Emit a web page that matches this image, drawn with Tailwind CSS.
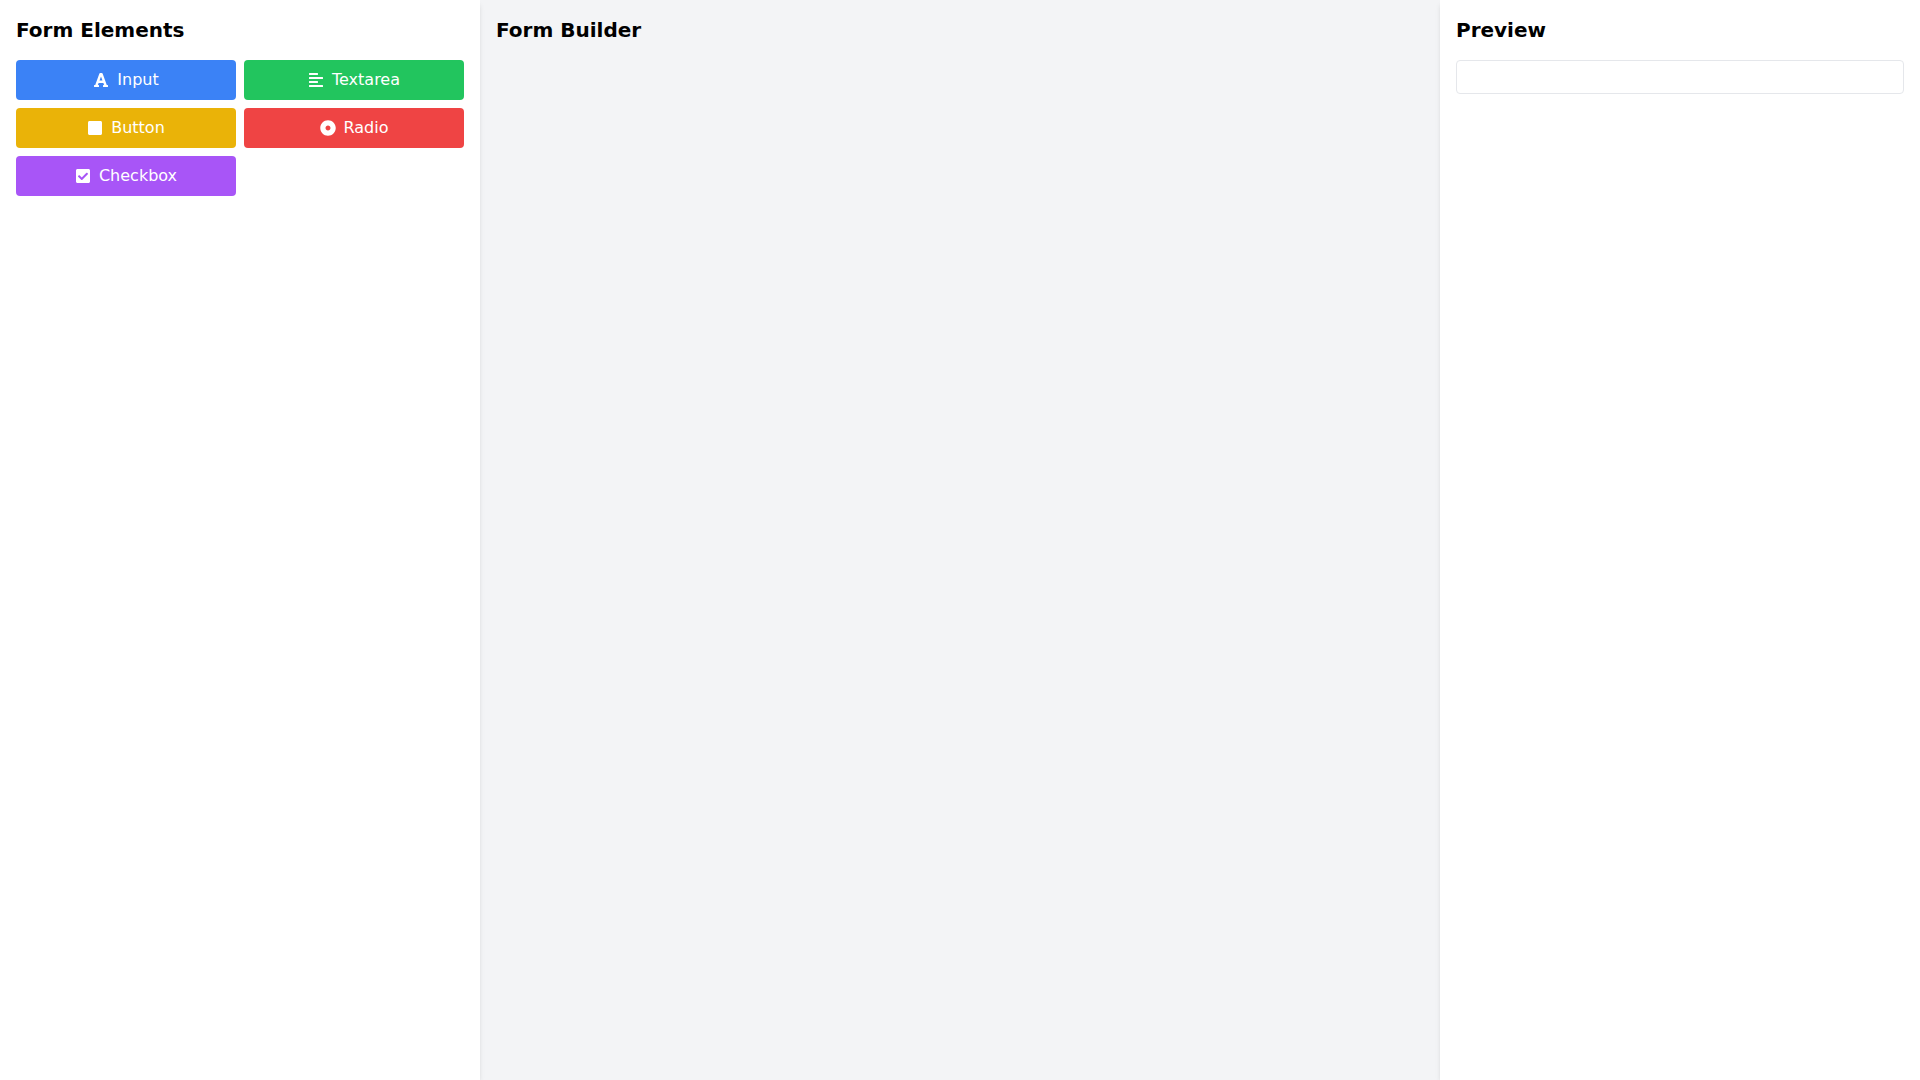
<!DOCTYPE html>
<html lang="en">
<head>
  <meta charset="UTF-8" />
  <meta name="viewport" content="width=device-width, initial-scale=1.0" />
  <title>Form Builder</title>
  <script src="https://cdn.jsdelivr.net/npm/@tailwindcss/browser@4"></script>
</head>
<body class="bg-[#f3f4f6] text-black font-['DejaVu_Sans',sans-serif]">

  <div class="flex min-h-screen">

    <!-- Form Elements -->
    <aside class="w-1/4 bg-white p-4 shadow-md">
      <h2 class="mb-4 text-xl font-bold">Form Elements</h2>
      <div class="grid grid-cols-2 gap-2">
        <button type="button" draggable="true" class="flex items-center justify-center gap-2 rounded bg-[#3b82f6] p-2 text-white cursor-move">
          <svg class="h-4 w-4" viewBox="0 0 448 512" fill="currentColor" aria-hidden="true"><path d="M432 416h-23.41L277.88 53.69A32 32 0 0 0 247.58 32h-47.16a32 32 0 0 0-30.3 21.69L39.41 416H16a16 16 0 0 0-16 16v32a16 16 0 0 0 16 16h128a16 16 0 0 0 16-16v-32a16 16 0 0 0-16-16h-19.58l23.3-64h152.56l23.3 64H304a16 16 0 0 0-16 16v32a16 16 0 0 0 16 16h128a16 16 0 0 0 16-16v-32a16 16 0 0 0-16-16zM176.85 272L224 142.51 271.15 272z" /></svg>
          Input
        </button>
        <button type="button" draggable="true" class="flex items-center justify-center gap-2 rounded bg-[#22c55e] p-2 text-white cursor-move">
          <svg class="h-4 w-4" viewBox="0 0 448 512" fill="currentColor" aria-hidden="true"><path d="M12.83 352h262.34A12.82 12.82 0 0 0 288 339.17v-38.34A12.82 12.82 0 0 0 275.17 288H12.83A12.82 12.82 0 0 0 0 300.83v38.34A12.82 12.82 0 0 0 12.83 352zm0-256h262.34A12.82 12.82 0 0 0 288 83.17V44.83A12.82 12.82 0 0 0 275.17 32H12.83A12.82 12.82 0 0 0 0 44.83v38.34A12.82 12.82 0 0 0 12.83 96zM432 160H16a16 16 0 0 0-16 16v32a16 16 0 0 0 16 16h416a16 16 0 0 0 16-16v-32a16 16 0 0 0-16-16zm0 256H16a16 16 0 0 0-16 16v32a16 16 0 0 0 16 16h416a16 16 0 0 0 16-16v-32a16 16 0 0 0-16-16z" /></svg>
          Textarea
        </button>
        <button type="button" draggable="true" class="flex items-center justify-center gap-2 rounded bg-[#eab308] p-2 text-white cursor-move">
          <svg class="h-4 w-4" viewBox="0 0 448 512" fill="currentColor" aria-hidden="true"><path d="M400 32H48C21.5 32 0 53.5 0 80v352c0 26.5 21.5 48 48 48h352c26.5 0 48-21.5 48-48V80c0-26.5-21.5-48-48-48z" /></svg>
          Button
        </button>
        <button type="button" draggable="true" class="flex items-center justify-center gap-2 rounded bg-[#ef4444] p-2 text-white cursor-move">
          <svg class="h-4 w-4" viewBox="0 0 512 512" fill="currentColor" aria-hidden="true"><path d="M256 8C119.033 8 8 119.033 8 256s111.033 248 248 248 248-111.033 248-248S392.967 8 256 8zm80 248c0 44.112-35.888 80-80 80s-80-35.888-80-80 35.888-80 80-80 80 35.888 80 80z" /></svg>
          Radio
        </button>
        <button type="button" draggable="true" class="flex items-center justify-center gap-2 rounded bg-[#a855f7] p-2 text-white cursor-move">
          <svg class="h-4 w-4" viewBox="0 0 448 512" fill="currentColor" aria-hidden="true"><path d="M400 480H48c-26.51 0-48-21.49-48-48V80c0-26.51 21.49-48 48-48h352c26.51 0 48 21.49 48 48v352c0 26.51-21.49 48-48 48zm-204.686-98.059l184-184c6.248-6.248 6.248-16.379 0-22.627l-22.627-22.627c-6.248-6.248-16.379-6.249-22.628 0L184 302.745l-70.059-70.059c-6.248-6.248-16.379-6.248-22.628 0l-22.627 22.627c-6.248 6.248-6.248 16.379 0 22.627l104 104c6.249 6.25 16.379 6.25 22.628.001z" /></svg>
          Checkbox
        </button>
      </div>
    </aside>

    <!-- Form Builder -->
    <main class="w-1/2 p-4">
      <h2 class="mb-4 text-xl font-bold">Form Builder</h2>
      <div id="form-builder"></div>
    </main>

    <!-- Preview -->
    <aside class="w-1/4 bg-white p-4 shadow-md">
      <h2 class="mb-4 text-xl font-bold">Preview</h2>
      <div id="preview" class="rounded border border-[#e5e7eb] p-4"></div>
    </aside>

  </div>

</body>
</html>
